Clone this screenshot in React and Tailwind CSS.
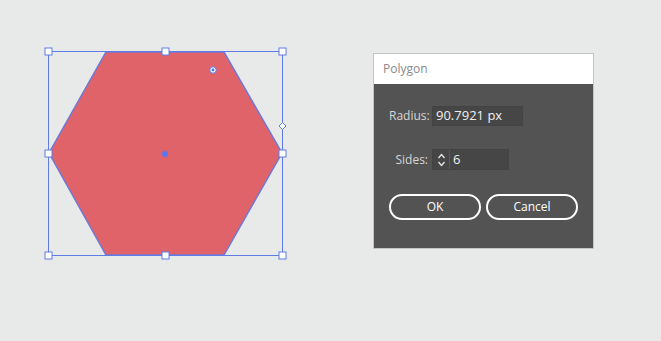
export default function App() {
  const handles = [
    [48, 51], [165, 51], [282, 51],
    [48, 153], [282, 153],
    [48, 255], [165, 255], [282, 255],
  ];

  return (
    <div className="flex h-[341px] w-[661px] items-start bg-[#e8e9e9] font-['Open_Sans',sans-serif]">
      <svg className="ml-[44px] mt-[46px] shrink-0" width="244" height="214" viewBox="44 46 244 214">
        <polygon
          points="106,52 224,52 282,153 224,255 106,255 49,153"
          fill="#e0636a"
          stroke="#6f78d8"
          strokeWidth="1.5"
        />
        <rect x="48.5" y="51.5" width="234" height="204" fill="none" stroke="#5f7ce6" strokeWidth="1" />
        <line x1="282.5" y1="126" x2="282.5" y2="153" stroke="#5f7ce6" />
        {handles.map(([x, y]) => (
          <rect key={`${x}-${y}`} x={x - 3} y={y - 3} width="7" height="7" fill="#fff" stroke="#5f7ce6" strokeWidth="1" />
        ))}
        <polygon points="282.5,122.5 286,126 282.5,129.5 279,126" fill="#fff" stroke="#5f7ce6" strokeWidth="1" />
        <circle cx="213" cy="70" r="3.2" fill="#fff" stroke="#5f7ce6" strokeWidth="1" />
        <circle cx="213" cy="70" r="1.4" fill="#4a6ef0" />
        <circle cx="165" cy="154" r="3" fill="#5877f0" />
      </svg>

      <div className="ml-[85px] mt-[53px] flex h-[196px] w-[221px] shrink-0 flex-col border border-[#c4c4c4] bg-[#535353]">
        <div className="flex h-[30px] items-center bg-white pl-[9px] text-[12px] text-[#8a8a8a]">Polygon</div>
        <div className="flex flex-col px-[15px] pt-[22px]">
          <div className="flex items-center gap-[4px]">
            <span className="w-[39px] text-right text-[12px] text-[#d6d6d6]">Radius:</span>
            <div className="flex h-[20px] w-[91px] items-center border border-[#434343] bg-[#464646] pl-[3px] text-[13px] text-[#f0f0f0]">
              90.7921 px
            </div>
          </div>
          <div className="mt-[23px] flex items-center gap-[4px]">
            <span className="w-[39px] text-right text-[12px] text-[#d6d6d6]">Sides:</span>
            <div className="flex h-[21px] border border-[#434343] bg-[#464646]">
              <div className="flex w-[17px] items-center justify-center border-r border-[#5a5a5a]">
                <svg width="9" height="16" viewBox="0 0 9 16" fill="none" stroke="#e6e6e6" strokeWidth="1.3">
                  <path d="M1.5 6 L4.5 2.5 L7.5 6" />
                  <path d="M1.5 10 L4.5 13.5 L7.5 10" />
                </svg>
              </div>
              <div className="flex w-[58px] items-center pl-[3px] text-[13px] text-[#f0f0f0]">6</div>
            </div>
          </div>
          <div className="mt-[24px] flex gap-[5px]">
            <button className="flex h-[26px] w-[92px] items-center justify-center rounded-full border-2 border-white text-[12px] text-white">
              OK
            </button>
            <button className="flex h-[26px] w-[92px] items-center justify-center rounded-full border-2 border-white text-[12px] text-white">
              Cancel
            </button>
          </div>
        </div>
      </div>
    </div>
  );
}
